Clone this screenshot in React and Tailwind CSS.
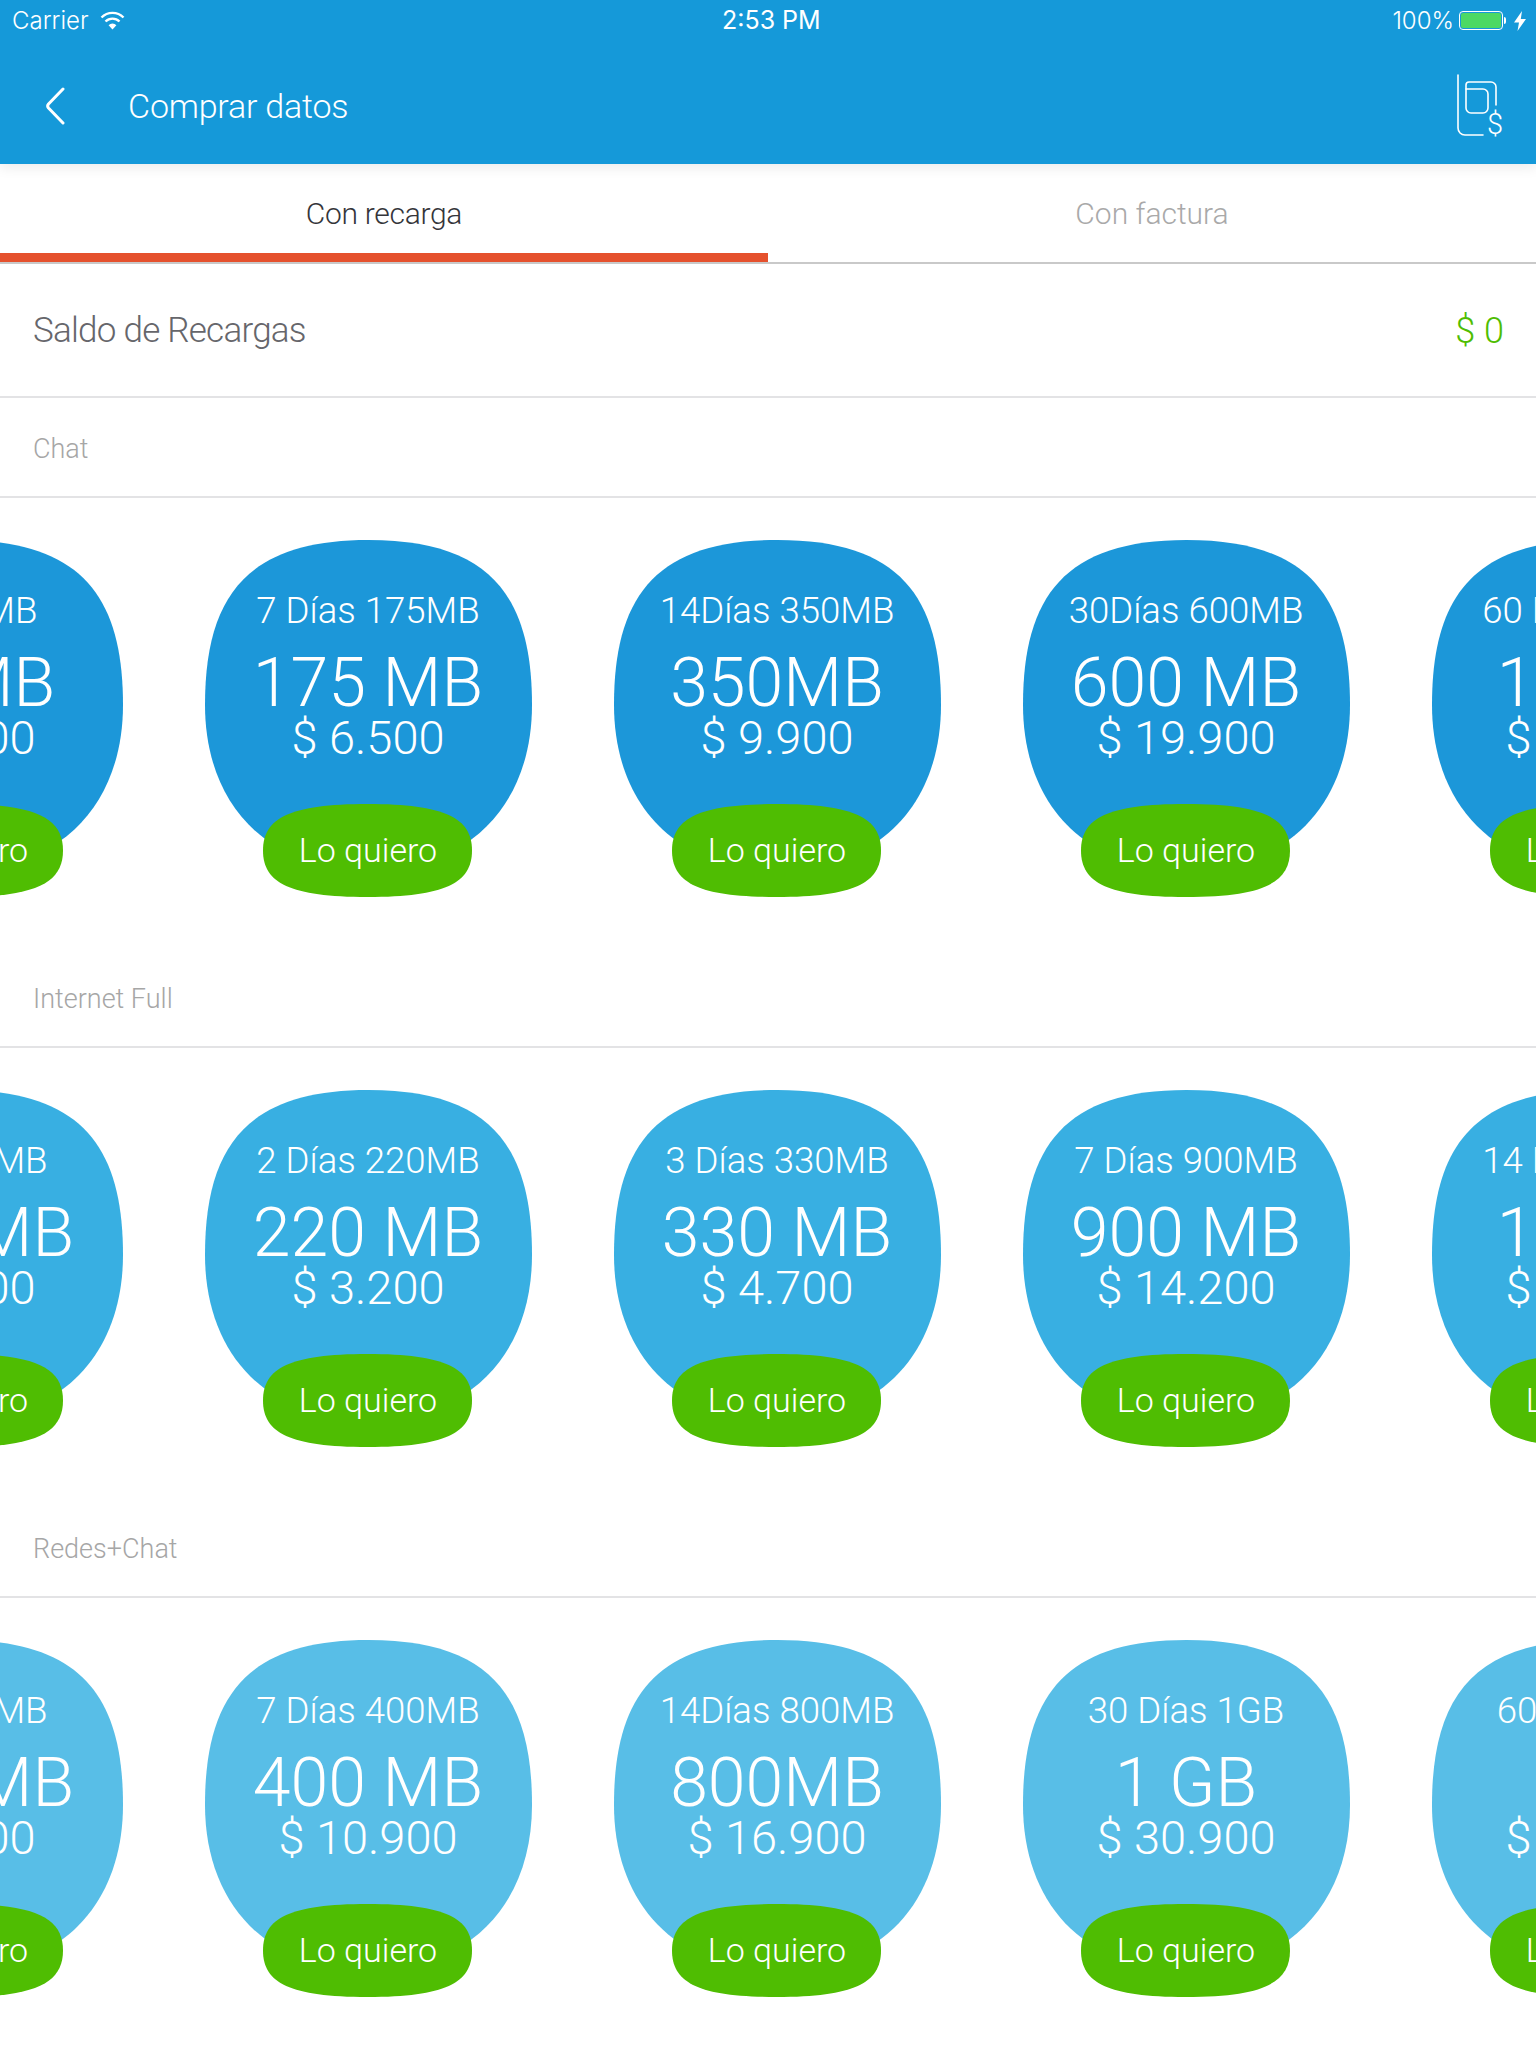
import React from 'react';

const sections = [
  {
    title: 'Chat',
    blob: '#1c97d9',
    plans: [
      { label: '1 D 50MB', size: '50 MB', price: '$ 2.500' },
      { label: '7 Días 175MB', size: '175 MB', price: '$ 6.500' },
      { label: '14Días 350MB', size: '350MB', price: '$ 9.900' },
      { label: '30Días 600MB', size: '600 MB', price: '$ 19.900' },
      { label: '60 Días 1.2GB', size: '1.2 GB', price: '$ 39.900' },
    ],
  },
  {
    title: 'Internet Full',
    blob: '#38afe2',
    plans: [
      { label: '1 D 110MB', size: '110 MB', price: '$ 1.700' },
      { label: '2 Días 220MB', size: '220 MB', price: '$ 3.200' },
      { label: '3 Días 330MB', size: '330 MB', price: '$ 4.700' },
      { label: '7 Días 900MB', size: '900 MB', price: '$ 14.200' },
      { label: '14 Días 1.8GB', size: '1.8 GB', price: '$ 24.900' },
    ],
  },
  {
    title: 'Redes+Chat',
    blob: '#58bee7',
    plans: [
      { label: '3 D 200MB', size: '200 MB', price: '$ 5.900' },
      { label: '7 Días 400MB', size: '400 MB', price: '$ 10.900' },
      { label: '14Días 800MB', size: '800MB', price: '$ 16.900' },
      { label: '30 Días 1GB', size: '1 GB', price: '$ 30.900' },
      { label: '60 Días 1GB', size: '1GB', price: '$ 49.900' },
    ],
  },
];

const StatusBar = () => (
  <div className="flex h-10 items-center justify-between pl-[12px] pr-[10px] pt-px font-['Inter',sans-serif] text-[24px] font-light text-white">
    <div className="flex items-center gap-[11px]">
      <span>Carrier</span>
      <svg width="25" height="19" viewBox="0 0 25 19" fill="none" stroke="white" strokeWidth="2.4">
        <path d="M1.5 6.5a15.5 15.5 0 0 1 22 0" />
        <path d="M5.5 10.5a10 10 0 0 1 14 0" />
        <path d="M12.5 18.5 8.6 14.2a5.4 5.4 0 0 1 7.8 0z" fill="white" stroke="none" />
      </svg>
    </div>
    <span className="absolute left-[722px] text-[25px] font-normal">2:53 PM</span>
    <div className="flex items-center">
      <span className="mr-[5px]">100%</span>
      <div className="flex h-[19px] w-[44px] rounded-[4px] border border-white p-px">
        <div className="h-full w-full rounded-[2px] bg-[#4cd964]" />
      </div>
      <div className="ml-px h-[7px] w-[2px] rounded-r-sm bg-white" />
      <svg className="ml-[8px]" width="12" height="20" viewBox="0 0 12 20" fill="white">
        <path d="M8 0 0 11.5h5L3.5 20 12 8H6.8z" />
      </svg>
    </div>
  </div>
);

const SimDollarIcon = () => (
  <svg width="52" height="68" viewBox="0 0 52 68" fill="none" stroke="white" strokeWidth="1.6" strokeLinecap="round">
    <path d="M2 3V56a7 7 0 0 0 7 7H27" />
    <path d="M10 17V13a3 3 0 0 1 3-3H35a5 5 0 0 1 5 5V33" />
    <path d="M10 17H27a5 5 0 0 1 5 5V36a5 5 0 0 1-5 5H15a5 5 0 0 1-5-5V17" />
    <text x="39" y="62" textAnchor="middle" fontSize="29" fontWeight="300" fill="white" stroke="none" fontFamily="Roboto, sans-serif">$</text>
  </svg>
);

const PlanCard = ({ plan, blob }) => (
  <div className="relative flex h-[357px] w-[326px] shrink-0 flex-col items-center pt-[49px] text-white">
    <svg className="absolute left-0 top-0" width="327" height="330" viewBox="0 0 327 330" fill={blob}>
      <path d="M163.5 0C285 0 327 56 327 165C327 260 269 330 163.5 330C58 330 0 260 0 165C0 56 42 0 163.5 0Z" />
    </svg>
    <div className="relative whitespace-nowrap text-[36.6px] font-light leading-[44px]">{plan.label}</div>
    <div className="relative mt-[17px] whitespace-nowrap text-[68px] font-light leading-[66px]">{plan.size}</div>
    <div className="relative whitespace-nowrap text-[47px] font-light leading-[44px]">{plan.price}</div>
    <button className="relative mt-auto flex h-[93px] w-[209px] items-center justify-center">
      <svg className="absolute -left-[1px] top-0" width="209" height="93" viewBox="0 0 209 93" fill="#4fbd02">
        <path d="M104.5 0C182 0 209 14 209 46.5C209 79 182 93 104.5 93C27 93 0 79 0 46.5C0 14 27 0 104.5 0Z" />
      </svg>
      <span className="relative text-[34px] font-light">Lo quiero</span>
    </button>
  </div>
);

const App = () => {
  return (
    <div className="h-[2048px] w-[1536px] overflow-hidden bg-white font-['Roboto',sans-serif]">
      <header className="relative z-10 h-[164px] bg-[#1599d9] shadow-[0_4px_12px_rgba(0,0,0,0.08)]">
        <StatusBar />
        <div className="flex h-[124px] items-center pr-[28px] pt-[8px]">
          <svg className="ml-[45px]" width="20" height="38" viewBox="0 0 20 38" fill="none" stroke="white" strokeWidth="3" strokeLinecap="round" strokeLinejoin="round">
            <path d="M18 2 3.5 17Q1.8 19 3.5 21L18 36" />
          </svg>
          <h1 className="ml-[63px] text-[34px] font-light tracking-[-0.2px] text-white">Comprar datos</h1>
          <div className="ml-auto">
            <SimDollarIcon />
          </div>
        </div>
      </header>

      <div className="flex h-[100px] border-b-2 border-[#c9c9c9]">
        <div className="flex h-[98px] w-[768px] items-center justify-center border-b-[9px] border-[#e5512d] pt-[9px] text-[30px] font-light tracking-[-0.3px] text-[#35353a]">
          Con recarga
        </div>
        <div className="flex h-[98px] w-[768px] items-center justify-center text-[30px] font-light text-[#a9a9a9]">
          Con factura
        </div>
      </div>

      <div className="flex h-[134px] items-center justify-between border-b-2 border-[#e3e3e5] pl-[33px] pr-[32px] pt-[2px]">
        <span className="text-[35px] font-light tracking-[-0.75px] text-[#66666b]">Saldo de Recargas</span>
        <span className="text-[36px] font-light text-[#4fbd02]">$ 0</span>
      </div>

      {sections.map((section) => (
        <section key={section.title}>
          <div className="flex h-[100px] items-center border-b-2 border-[#e3e3e5] pl-[33px] pt-[5px] text-[27px] font-light text-[#a6a6a6]">
            {section.title}
          </div>
          <div className="ml-[-204px] flex h-[450px] gap-[83px] pt-[42px]">
            {section.plans.map((plan) => (
              <PlanCard key={plan.label + plan.price} plan={plan} blob={section.blob} />
            ))}
          </div>
        </section>
      ))}
    </div>
  );
};

export default App;
